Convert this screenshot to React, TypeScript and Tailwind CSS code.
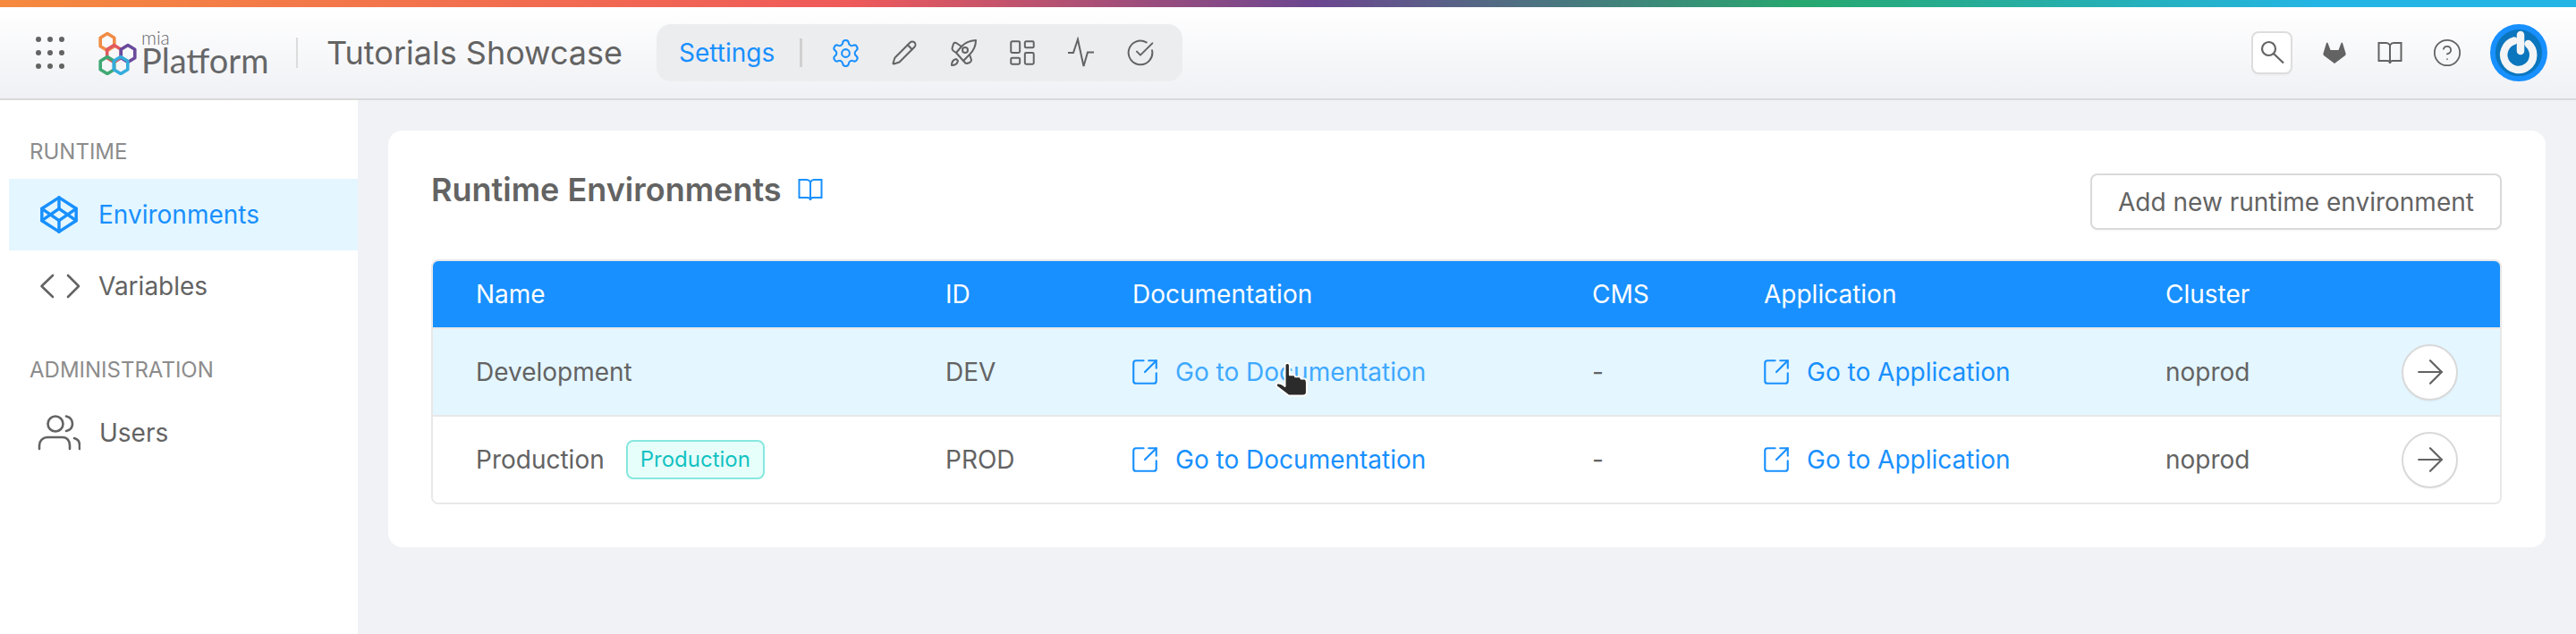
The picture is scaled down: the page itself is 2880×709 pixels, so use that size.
import React from "react";
import { CircleHelp, Settings, Pencil, LayoutDashboard, CircleCheckBig, Codepen, SquareArrowOutUpRight, ArrowRight } from "lucide-react";

function Book({ className }: { className?: string }) {
  return (
    <svg viewBox="0 0 28 26" fill="none" stroke="currentColor" strokeWidth="2" className={className}>
      <path d="M14 4.5C13 3 12 2 10 2H1.5V22H11C13 22 14 23 14 25C14 23 15 22 17 22H26.5V2H18C16 2 15 3 14 4.5ZM14 4.5V25" />
    </svg>
  );
}

function Gitlab() {
  return (
    <svg viewBox="0 0 26 24" fill="currentColor" className="ml-[34px] w-[26px] h-6">
      <path d="M13 24L1 15Q0 14 0.5 12.5L4 1Q4.5 0 5.5 1L8.5 9H17.5L20.5 1Q21.5 0 22 1L25.5 12.5Q26 14 25 15Z" />
    </svg>
  );
}

function SearchGlass() {
  return (
    <svg viewBox="0 0 28 28" fill="none" stroke="currentColor" strokeWidth="2.2" className="w-7 h-7">
      <circle cx="10.5" cy="9.5" r="7.5" />
      <path d="M16 15L27 25.5" />
    </svg>
  );
}

function Rocket() {
  return (
    <svg viewBox="0 0 32 32" fill="none" stroke="currentColor" strokeWidth="2" strokeLinejoin="round" className="w-8 h-8">
      <path d="M30 2C24 2.5 18 4.5 14 9L8 16L16 25L23 18C27 14 30 8 30 2Z" />
      <path d="M14 9L8 5Q6 4 5 6L3.5 11Q3.5 13 5 14L8 16" />
      <path d="M23 18L25 24Q25 26 23 27L20 28Q18 28 17 26L16 25" />
      <circle cx="18" cy="13" r="3" />
      <path d="M8 23Q3 24 3 30Q9 30 10 25Z" />
    </svg>
  );
}

function Logo() {
  const hex = (cx: number, cy: number, c: string) => {
    const r = 9.5;
    const w = r * 0.82;
    return <polygon key={c} points={`${cx},${cy - r} ${cx + w},${cy - r / 2} ${cx + w},${cy + r / 2} ${cx},${cy + r} ${cx - w},${cy + r / 2} ${cx - w},${cy - r / 2}`} fill="none" stroke={c} strokeWidth="3.6" strokeLinejoin="round" />;
  };
  return (
    <svg viewBox="0 0 46 50" className="w-[46px] h-[50px]">
      {hex(12, 13, "#f08c46")}
      {hex(19.5, 26, "#e05a5f")}
      {hex(35, 26, "#6a4a9c")}
      {hex(12, 39, "#3fa873")}
      {hex(27, 39, "#35acdc")}
    </svg>
  );
}

function Pulse() {
  return (
    <svg viewBox="0 0 32 36" fill="none" stroke="currentColor" strokeWidth="2" className="w-8 h-9">
      <path d="M1 18H7L12 3L18.5 33L23 17.5H30" />
    </svg>
  );
}

function Code() {
  return (
    <svg viewBox="0 0 46 30" fill="none" stroke="#636363" strokeWidth="2.6" strokeLinecap="round" strokeLinejoin="round" className="w-[46px] h-[30px]">
      <path d="M15 3L2.5 15L15 27M32 3L44 15L32 27" />
    </svg>
  );
}

function Users() {
  return (
    <svg viewBox="0 0 48 42" fill="none" stroke="#636363" strokeWidth="2.6" strokeLinecap="round" className="w-12 h-[42px]">
      <circle cx="20" cy="11" r="8.5" />
      <path d="M32 2.5C37 3.5 39 7 39 11C39 15 37 18 32 19" />
      <path d="M2 39V35C2 30 6 26 11 26H28C33 26 36 30 36 35V39" />
      <path d="M41 27C45 28 47 31 47 35V39" />
    </svg>
  );
}

function Power() {
  return (
    <div className="w-16 h-16 rounded-full bg-[#0b76bd] border-[6px] border-[#1890ff] flex items-center justify-center">
      <svg viewBox="0 0 52 52" className="w-[52px] h-[52px]" fill="none">
        <path d="M18 14A16.5 16.5 0 1 0 34 14" stroke="#f3f4f6" strokeWidth="8.5" strokeLinecap="round" transform="rotate(12 26 27)" />
        <path d="M28 6V24" stroke="#f3f4f6" strokeWidth="8.5" strokeLinecap="round" />
      </svg>
    </div>
  );
}

function Hand() {
  return (
    <svg viewBox="-1 -1 36 38" className="absolute left-[162px] top-[5px] w-[38px] h-[41px]">
      <path d="M10 2Q12.5 -1 15 2L15 13L20 13L21 15L26 15L27 17L31 17Q33 18 33 21L33 31Q33 35 29 35L14 35L1 25Q0 23 2 22Q5 21 10 25Z" fill="#2b2b2b" stroke="#ffffff" strokeWidth="1.8" strokeLinejoin="round" />
    </svg>
  );
}

function GoLink({ label, hover, hand }: { label: string; hover?: boolean; hand?: boolean }) {
  return (
    <span className={`relative -ml-[3px] flex items-center gap-[17px] ${hover ? "text-[#40a9ff]" : "text-[#1890ff]"}`}>
      <SquareArrowOutUpRight className="w-[34px] h-[34px] text-[#1890ff]" strokeWidth={1.5} />
      <span className="leading-[34px]">{label}</span>
      {hand && <Hand />}
    </span>
  );
}

function Row({ name, id, active, badge }: { name: string; id: string; active?: boolean; badge?: boolean }) {
  return (
    <div className={`grid grid-cols-[525px_209px_514px_192px_449px_264px_63px] items-center pl-[48px] pr-[47px] h-[98px] border-t-2 border-[#e8e8e8] text-[28px] text-[#636363] ${active ? "bg-[#e4f6ff]" : "bg-white"}`}>
      <div className="flex items-center gap-[24px]">
        <span>{name}</span>
        {badge && <span className="h-[44px] px-[14px] flex items-center rounded-lg border-2 border-[#87e8de] bg-[#e6fffb] text-[24px] text-[#13c2c2]">Production</span>}
      </div>
      <div>{id}</div>
      <GoLink label="Go to Documentation" hover={active} hand={active} />
      <div>-</div>
      <GoLink label="Go to Application" />
      <div>noprod</div>
      <button className="w-[63px] h-[63px] rounded-full border-2 border-[#d9d9d9] bg-white flex items-center justify-center shadow-[0_2px_0_rgba(0,0,0,0.02)]">
        <ArrowRight className="w-[44px] h-[44px] text-[#636363]" strokeWidth={1.2} />
      </button>
    </div>
  );
}

export default function App() {
  const grey = "text-[#636363]";
  return (
    <div className="w-[2880px] h-[709px] overflow-hidden flex flex-col bg-[#f0f2f6] [font-family:Inter,sans-serif]">
      <div className="h-2 bg-[linear-gradient(90deg,#f58a3f_0%,#ef5a5a_33%,#6c4690_51%,#27a86f_70%,#25b5e5_90%)]" />
      <header className="h-[104px] border-b-2 border-[#d9d9d9] bg-[linear-gradient(180deg,#ffffff_0%,#f0f1f5_100%)] flex items-center pl-10 pr-8">
        <div className="w-8 grid grid-cols-3 gap-y-[9px] gap-x-[7px]">
          {Array.from({ length: 9 }).map((_, i) => (
            <span key={i} className="w-[6px] h-[6px] rounded-full bg-[#636363]" />
          ))}
        </div>
        <div className="ml-9 flex items-center">
          <Logo />
          <div className="ml-[4px] w-[141px] flex flex-col text-[#666769] [font-family:Lato,sans-serif]">
            <span className="text-[21px] leading-[16px] font-light">mia</span>
            <span className="text-[38px] leading-[34px] font-normal">Platform</span>
          </div>
        </div>
        <div className="ml-8 w-[2px] h-[34px] bg-[#dcdcdc]" />
        <div className={`ml-[32px] text-[36px] ${grey}`}>Tutorials Showcase</div>
        <nav className="ml-[38px] h-16 w-[588px] rounded-2xl bg-[#ecedef] flex items-center pl-[25px]">
          <span className="text-[28px] text-[#1890ff]">Settings</span>
          <span className="ml-[28px] w-[3px] h-8 bg-[#d0d0d0]" />
          <div className="ml-[15px] flex items-center text-[#636363]">
            <div className="w-[66px] flex justify-center"><Settings className="w-[35px] h-[35px] text-[#1890ff]" strokeWidth={1.4} /></div>
            <div className="w-[66px] flex justify-center"><Pencil className="w-[30px] h-[30px]" strokeWidth={1.6} /></div>
            <div className="w-[66px] flex justify-center"><Rocket /></div>
            <div className="w-[66px] flex justify-center"><LayoutDashboard className="w-[34px] h-[34px]" strokeWidth={1.4} /></div>
            <div className="w-[66px] flex justify-center"><Pulse /></div>
            <div className="w-[66px] flex justify-center"><CircleCheckBig className="w-8 h-8" strokeWidth={1.5} /></div>
          </div>
        </nav>
        <div className="ml-auto flex items-center text-[#636363]">
          <button className="w-[46px] h-[48px] rounded-lg border-2 border-[#dddddd] bg-white flex items-center justify-center shadow-[0_2px_0_rgba(0,0,0,0.02)]">
            <SearchGlass />
          </button>
          <Gitlab />
          <Book className="ml-[35px] w-7 h-[26px]" />
          <CircleHelp className="ml-[33px] w-[34px] h-[34px]" strokeWidth={1.25} />
          <div className="ml-[31px]"><Power /></div>
        </div>
      </header>
      <div className="flex-1 flex min-h-0">
        <aside className="w-[400px] bg-white pl-[10px] pt-[43px]">
          <div className="pl-[23px] mb-[15px] text-[24px] leading-[30px] text-[#8c8c8c]">RUNTIME</div>
          <div className="h-20 bg-[#e4f6ff] flex items-center gap-[21px] pl-[33px] text-[28px] text-[#1890ff]">
            <Codepen className="w-[46px] h-[46px]" strokeWidth={1.8} />
            <span>Environments</span>
          </div>
          <div className={`h-20 flex items-center gap-[20px] pl-[34px] text-[28px] ${grey}`}>
            <Code />
            <span>Variables</span>
          </div>
          <div className="mt-[39px] pl-[23px] mb-[15px] text-[24px] leading-[30px] text-[#8c8c8c]">ADMINISTRATION</div>
          <div className={`h-20 flex items-center gap-[21px] pl-[32px] text-[28px] ${grey}`}>
            <Users />
            <span>Users</span>
          </div>
        </aside>
        <main className="flex-1 pl-[34px] pr-[34px] pt-[34px]">
          <section className="rounded-2xl bg-white pl-12 pr-[49px] pt-[44px] pb-12">
            <div className="flex items-start justify-between">
              <div className="h-11 flex items-center gap-[18px]">
                <h1 className={`text-[36px] font-semibold ${grey}`}>Runtime Environments</h1>
                <Book className="w-7 h-[26px] text-[#1890ff]" />
              </div>
              <button className={`mt-1 w-[460px] h-[63px] rounded-lg border-2 border-[#d9d9d9] bg-white text-[28px] shadow-[0_2px_0_rgba(0,0,0,0.02)] ${grey}`}>Add new runtime environment</button>
            </div>
            <div className="mt-[33px] border-2 border-[#e8e8e8] rounded-lg overflow-hidden">
              <div className="grid grid-cols-[525px_209px_514px_192px_449px_264px_63px] items-center pl-[48px] pr-[47px] h-[74px] bg-[#1890ff] text-[28px] text-white">
                <div>Name</div>
                <div>ID</div>
                <div>Documentation</div>
                <div>CMS</div>
                <div>Application</div>
                <div>Cluster</div>
                <div />
              </div>
              <Row name="Development" id="DEV" active />
              <Row name="Production" id="PROD" badge />
            </div>
          </section>
        </main>
      </div>
    </div>
  );
}
